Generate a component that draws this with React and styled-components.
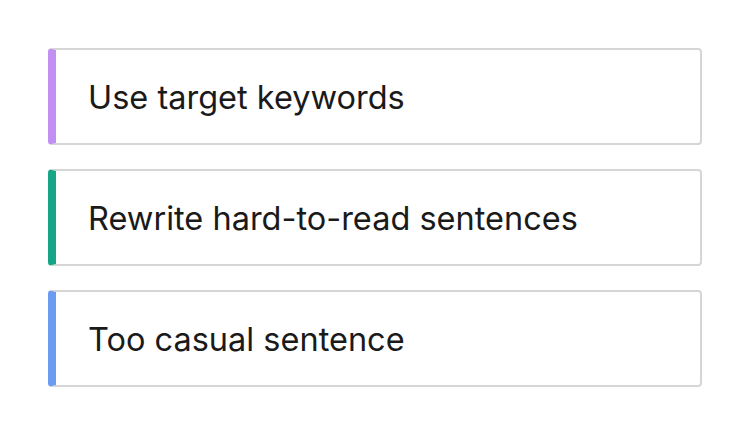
import React from "react";
import styled, { createGlobalStyle } from "styled-components";

const GlobalStyle = createGlobalStyle`
  body {
    margin: 0;
    background: #ffffff;
    font-family: Inter, "Liberation Sans", sans-serif;
  }
`;

const List = styled.div`
  display: flex;
  flex-direction: column;
  gap: 24px;
  padding: 48px 48px 0 48px;
`;

// one suggestion row; the coloured left edge marks its category
const Card = styled.div`
  display: flex;
  align-items: center;
  height: 97px;
  box-sizing: border-box;
  border: 2px solid #d6d6d6;
  border-left: 8px solid ${(p) => p.accent};
  border-radius: 4px;
  padding: 2px 0 0 32px;
  font-size: 32.5px;
  color: #1a1a1a;
`;

const items = [
  { text: "Use target keywords", accent: "#c28ff2" },
  { text: "Rewrite hard-to-read sentences", accent: "#16a685" },
  { text: "Too casual sentence", accent: "#6c9bf2" },
];

const App = () => {
  return (
    <>
      <GlobalStyle />
      <List>
        {items.map((item) => (
          <Card key={item.text} accent={item.accent}>
            {item.text}
          </Card>
        ))}
      </List>
    </>
  );
};

export default App;
